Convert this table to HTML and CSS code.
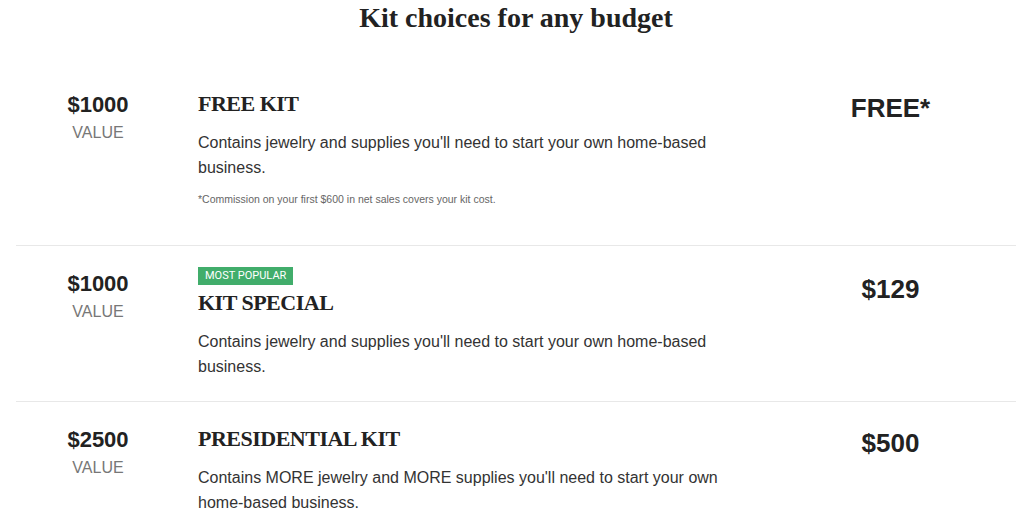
FILE: index.html
```html
<!DOCTYPE html>
<html>
<head>
<meta charset="utf-8">
<link rel="stylesheet" href="styles.css">
</head>
<body>
<section class="kits">
  <h2 class="kits-title">Kit choices for any budget</h2>
  <div class="kit">
    <div class="kit-value"><div class="amount">$1000</div><div class="label">VALUE</div></div>
    <div class="kit-body">
      <h3 class="kit-name">FREE KIT</h3>
      <p class="kit-desc">Contains jewelry and supplies you'll need to start your own home-based business.</p>
      <p class="kit-note">*Commission on your first $600 in net sales covers your kit cost.</p>
    </div>
    <div class="kit-price">FREE*</div>
  </div>
  <div class="kit">
    <div class="kit-value"><div class="amount">$1000</div><div class="label">VALUE</div></div>
    <div class="kit-body">
      <span class="badge">MOST POPULAR</span>
      <h3 class="kit-name">KIT SPECIAL</h3>
      <p class="kit-desc">Contains jewelry and supplies you'll need to start your own home-based business.</p>
    </div>
    <div class="kit-price">$129</div>
  </div>
  <div class="kit">
    <div class="kit-value"><div class="amount">$2500</div><div class="label">VALUE</div></div>
    <div class="kit-body">
      <h3 class="kit-name">PRESIDENTIAL KIT</h3>
      <p class="kit-desc">Contains MORE jewelry and MORE supplies you'll need to start your own home-based business.</p>
    </div>
    <div class="kit-price">$500</div>
  </div>
</section>
</body>
</html>
```
FILE: styles.css
```css
* { box-sizing: border-box; }
body {
  margin: 0;
  background: #fff;
  color: #222;
  font-family: "Liberation Sans", Arial, sans-serif;
}
.kits {
  padding: 0 12px 0 16px;
}
.kits-title {
  margin: 0 0 31px;
  text-align: center;
  font-family: "Liberation Serif", "Times New Roman", serif;
  font-weight: bold;
  font-size: 28px;
  line-height: 36px;
  color: #222;
}
.kit {
  display: grid;
  grid-template-columns: 164px 542px 1fr;
  column-gap: 18px;
  padding: 20px 0 22px;
  border-top: 1px solid #e8e8e8;
}
.kit:first-of-type { border-top: none; padding-bottom: 38px; }
.kit-value {
  text-align: center;
  padding-top: 5px;
}
.amount {
  font-weight: bold;
  font-size: 22px;
  line-height: 26px;
  color: #222;
}
.label {
  margin-top: 2px;
  font-size: 16px;
  line-height: 26px;
  color: #777;
}
.kit-name {
  margin: 0;
  font-family: "Liberation Serif", "Times New Roman", serif;
  font-weight: bold;
  font-size: 22px;
  letter-spacing: -0.5px;
  line-height: 34px;
  color: #222;
}
.kit-desc {
  margin: 9px 0 0;
  font-size: 16px;
  line-height: 25px;
  color: #333;
}
.kit-note {
  margin: 11px 0 0;
  font-size: 10.5px;
  line-height: 16px;
  color: #666;
}
.badge {
  display: inline-block;
  margin-top: 1px;
  margin-bottom: 1px;
  padding: 0 7px;
  height: 18px;
  line-height: 18px;
  background: #41ad6b;
  color: #fff;
  font-family: Roboto, "Liberation Sans", sans-serif;
  font-size: 11px;
  vertical-align: top;
}
.kit-price {
  padding-left: 7px;
  text-align: center;
  font-weight: bold;
  font-size: 26px;
  line-height: 30px;
  padding-top: 8px;
  color: #222;
}
.kit:first-of-type .kit-price { padding-top: 6px; }
.kit:last-of-type .kit-price { padding-top: 6px; }
```
